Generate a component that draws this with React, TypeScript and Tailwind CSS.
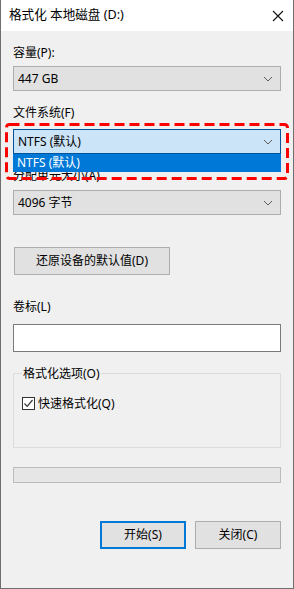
import React from 'react';

const FONT = { fontFamily: '"Noto Sans", "Noto Sans CJK SC", sans-serif' };

function Chevron() {
  return (
    <svg width="10" height="6" viewBox="0 0 10 6" className="shrink-0">
      <path d="M1 1 L5 5 L9 1" fill="none" stroke="#5c5c5c" strokeWidth="1" />
    </svg>
  );
}

function Combo({ value, active }: { value: string; active?: boolean }) {
  return (
    <div
      className={`h-[25px] w-full flex items-center justify-between pl-[4px] pr-[7px] border text-[12px] text-black ${
        active ? 'bg-[#cce4f7] border-[#005499]' : 'bg-[#e1e1e1] border-[#adadad]'
      }`}
    >
      <span>{value}</span>
      <Chevron />
    </div>
  );
}

function Label({ text, className = '' }: { text: string; className?: string }) {
  return <div className={`h-[16px] flex items-center text-[12px] text-black leading-none ${className}`}>{text}</div>;
}

export default function App() {
  return (
    <div className="w-[294px] h-[589px] bg-[#f0f0f0] border border-t-0 border-[#6f6f6f] flex flex-col" style={FONT}>
      {/* title bar */}
      <div className="h-[31px] bg-white flex items-center justify-between pl-[8px] pr-[9px] shrink-0">
        <span className="text-[12.6px] text-black">格式化 本地磁盘 (D:)</span>
        <svg width="12" height="12" viewBox="0 0 12 12">
          <path d="M1 1 L11 11 M11 1 L1 11" stroke="#111" strokeWidth="1.1" />
        </svg>
      </div>

      <div className="flex flex-col px-[12px]">
        <Label text="容量(P):" className="mt-[14px]" />
        <div className="mt-[5px]">
          <Combo value="447 GB" />
        </div>

        <Label text="文件系统(F)" className="mt-[14px]" />
        <div className="mt-[8px] relative z-10">
          <Combo value="NTFS (默认)" active />
          {/* open dropdown list */}
          <div className="absolute left-0 right-0 top-[25px] h-[18px] bg-[#0078d7] text-white text-[12px] flex items-center pl-[4px]">
            NTFS (默认)
          </div>
          {/* red dashed highlight */}
          <svg className="absolute left-[-8px] top-[-6px] pointer-events-none" width="284" height="57" viewBox="0 0 284 57">
            <rect x="1.5" y="1.5" width="281" height="54" rx="3" fill="none" stroke="#ff0000" strokeWidth="3" strokeDasharray="10 5" />
          </svg>
        </div>

        <Label text="分配单元大小(A)" className="mt-[14px]" />
        <div className="mt-[6px]">
          <Combo value="4096 字节" />
        </div>

        <button className="mt-[32px] ml-[1px] w-[156px] h-[28px] bg-[#e1e1e1] border border-[#adadad] text-[12px] text-black flex items-center justify-center">
          还原设备的默认值(D)
        </button>

        <Label text="卷标(L)" className="mt-[24px]" />
        <div className="mt-[9px] h-[28px] w-full bg-white border border-[#7a7a7a]" />

        <div className="mt-[21px] h-[75px] w-full border border-[#dcdcdc] relative">
          <span className="absolute left-[8px] top-[-6px] bg-[#f0f0f0] px-[1px] text-[12px] text-black leading-none">
            格式化选项(O)
          </span>
          <div className="flex items-center mt-[23px] ml-[8px] gap-[3px]">
            <div className="w-[13px] h-[13px] border border-[#333] bg-white flex items-center justify-center">
              <svg width="11" height="11" viewBox="0 0 11 11">
                <path d="M1.5 5.5 L4.2 8.3 L9.5 2" fill="none" stroke="#333" strokeWidth="1.2" />
              </svg>
            </div>
            <span className="text-[12px] text-black leading-none">快速格式化(Q)</span>
          </div>
        </div>

        <div className="mt-[19px] h-[16px] w-full bg-[#e6e6e6] border border-[#bcbcbc]" />

        <div className="mt-[38px] flex justify-end gap-[9px]">
          <button className="w-[86px] h-[28px] bg-[#e1e1e1] border-2 border-[#0078d7] text-[12px] text-black flex items-center justify-center">
            开始(S)
          </button>
          <button className="w-[86px] h-[28px] bg-[#e1e1e1] border border-[#adadad] text-[12px] text-black flex items-center justify-center">
            关闭(C)
          </button>
        </div>
      </div>
    </div>
  );
}
